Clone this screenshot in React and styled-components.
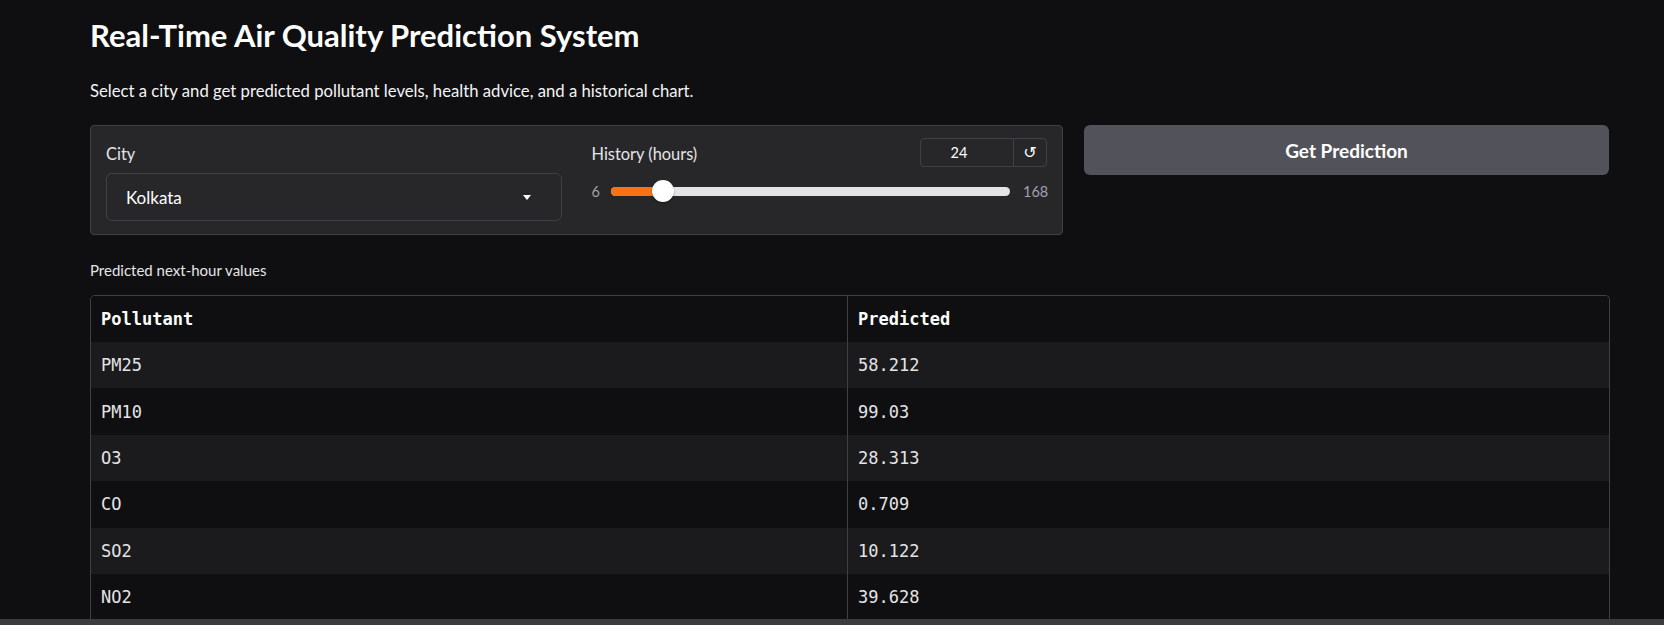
import React from 'react'
import styled, { createGlobalStyle } from 'styled-components'

const GlobalStyle = createGlobalStyle`
  html, body {
    margin: 0;
    padding: 0;
    background: #0f0f11;
    overflow: hidden;
  }
  body {
    font-family: 'Lato', 'Noto Sans', sans-serif;
    color: #f4f4f5;
  }
`

const Page = styled.div`
  height: 625px;
  padding: 17px 0 0 90px;
  box-sizing: border-box;
  width: 1609px;
  display: flex;
  flex-direction: column;
`

const Title = styled.h1`
  margin: 0;
  font-size: 31px;
  line-height: 36px;
  font-weight: 700;
  color: #ffffff;
`

const Subtitle = styled.p`
  margin: 27px 0 0;
  font-size: 16.7px;
  line-height: 22px;
  color: #f4f4f5;
`

const Row = styled.div`
  margin-top: 23px;
  display: flex;
  gap: 21px;
  align-items: flex-start;
`

const Panel = styled.div`
  width: 973px;
  height: 110px;
  box-sizing: border-box;
  background: #27272a;
  border: 1px solid #3f3f46;
  border-radius: 4px;
  padding: 12px 15px 13px;
  display: grid;
  grid-template-columns: 1fr 1fr;
  column-gap: 30px;
`

const Field = styled.div`
  display: flex;
  flex-direction: column;
`

const FieldHead = styled.div`
  display: flex;
  justify-content: space-between;
  align-items: center;
  height: 30px;
`

const Label = styled.span`
  font-size: 16.4px;
  color: #e4e4e7;
  line-height: 20px;
  margin-top: ${({ $shift }) => $shift || 0}px;
`

const Select = styled.div`
  margin-top: 5px;
  height: 48px;
  box-sizing: border-box;
  border: 1px solid #3f3f46;
  border-radius: 6px;
  display: flex;
  align-items: center;
  justify-content: space-between;
  padding: 0 30px 0 19px;
  font-size: 17px;
  color: #ffffff;
`

const Caret = styled.span`
  width: 0;
  height: 0;
  border-left: 4px solid transparent;
  border-right: 4px solid transparent;
  border-top: 5px solid #ffffff;
`

const NumberBox = styled.div`
  display: flex;
  width: 127px;
  height: 29px;
  box-sizing: border-box;
  border: 1px solid #3f3f46;
  border-radius: 4px;
  margin-top: -1px;
`

const NumberValue = styled.div`
  flex: 1;
  display: flex;
  align-items: center;
  justify-content: center;
  padding-right: 16px;
  font-size: 14.5px;
  color: #ffffff;
  border-right: 1px solid #3f3f46;
`

const ResetButton = styled.div`
  width: 32px;
  display: flex;
  align-items: center;
  justify-content: center;
  color: #ffffff;
  font-family: 'DejaVu Sans', sans-serif;
  font-size: 16px;
`

const SliderRow = styled.div`
  margin-top: 11px;
  display: flex;
  align-items: center;
  height: 24px;
`

const RangeLabel = styled.span`
  font-size: 14.5px;
  color: #a1a1aa;
  width: ${({ $w }) => $w}px;
  text-align: ${({ $align }) => $align};
`

const Track = styled.div`
  position: relative;
  flex: 1;
  height: 9px;
  border-radius: 5px;
  background: #e4e4e7;
  margin: 0 ${({ $mr }) => $mr}px 0 ${({ $ml }) => $ml}px;
`

const Fill = styled.div`
  position: absolute;
  left: 0;
  top: 0;
  bottom: 0;
  border-radius: 5px 0 0 5px;
  background: #f97316;
`

const Thumb = styled.div`
  position: absolute;
  top: 50%;
  width: 22px;
  height: 22px;
  margin: -11px 0 0 -11px;
  border-radius: 50%;
  background: #ffffff;
  box-shadow: 0 1px 2px rgba(0, 0, 0, 0.4);
`

const PrimaryButton = styled.button`
  width: 525px;
  height: 50px;
  border: none;
  border-radius: 6px;
  background: #52525b;
  color: #ffffff;
  font-family: inherit;
  font-size: 19px;
  font-weight: 700;
  cursor: pointer;
`

const TableLabel = styled.div`
  margin-top: 25px;
  font-size: 15px;
  line-height: 20px;
  color: #e4e4e7;
`

const Table = styled.div`
  margin-top: 15px;
  width: 1520px;
  box-sizing: border-box;
  border: 1px solid #3f3f46;
  border-bottom: none;
  border-radius: 5px 5px 0 0;
  overflow: hidden;
  font-family: 'DejaVu Sans Mono', 'Liberation Mono', monospace;
  font-size: 17px;
`

const TableRow = styled.div`
  display: grid;
  grid-template-columns: 756px 1fr;
  height: ${({ $head }) => ($head ? 46 : 46.4)}px;
  background: ${({ $odd }) => ($odd ? '#1b1b1d' : '#0f0f11')};
`

const Cell = styled.div`
  display: flex;
  align-items: center;
  padding-left: 10px;
  color: ${({ $head }) => ($head ? '#ffffff' : '#e4e4e7')};
  font-weight: ${({ $head }) => ($head ? 700 : 400)};
  & + & {
    border-left: 1px solid #3f3f46;
  }
`

const Scrollbar = styled.div`
  position: fixed;
  left: 0;
  right: 0;
  bottom: 0;
  height: 6px;
  background: #3c3c3c;
`

const rows = [
  ['PM25', '58.212'],
  ['PM10', '99.03'],
  ['O3', '28.313'],
  ['CO', '0.709'],
  ['SO2', '10.122'],
  ['NO2', '39.628'],
]

const Slider = ({ min, max, value }) => {
  const ratio = (value - min) / (max - min)
  const left = `calc(${ratio} * (100% - 22px) + 11px)`
  return (
    <SliderRow>
      <RangeLabel $w={10} $align="left">{min}</RangeLabel>
      <Track $ml={9} $mr={13}>
        <Fill style={{ width: left }} />
        <Thumb style={{ left }} />
      </Track>
      <RangeLabel $w={24} $align="right">{max}</RangeLabel>
    </SliderRow>
  )
}

export default function App() {
  return (
    <>
      <GlobalStyle />
      <Page>
        <Title>Real-Time Air Quality Prediction System</Title>
        <Subtitle>
          Select a city and get predicted pollutant levels, health advice, and a historical chart.
        </Subtitle>
        <Row>
          <Panel>
            <Field>
              <FieldHead>
                <Label $shift={2}>City</Label>
              </FieldHead>
              <Select>
                <span>Kolkata</span>
                <Caret />
              </Select>
            </Field>
            <Field>
              <FieldHead>
                <Label $shift={2}>History (hours)</Label>
                <NumberBox>
                  <NumberValue>24</NumberValue>
                  <ResetButton>↺</ResetButton>
                </NumberBox>
              </FieldHead>
              <Slider min={6} max={168} value={24} />
            </Field>
          </Panel>
          <PrimaryButton>Get Prediction</PrimaryButton>
        </Row>
        <TableLabel>Predicted next-hour values</TableLabel>
        <Table>
          <TableRow $head>
            <Cell $head>Pollutant</Cell>
            <Cell $head>Predicted</Cell>
          </TableRow>
          {rows.map(([name, val], i) => (
            <TableRow key={name} $odd={i % 2 === 0}>
              <Cell>{name}</Cell>
              <Cell>{val}</Cell>
            </TableRow>
          ))}
        </Table>
      </Page>
      <Scrollbar />
    </>
  )
}
